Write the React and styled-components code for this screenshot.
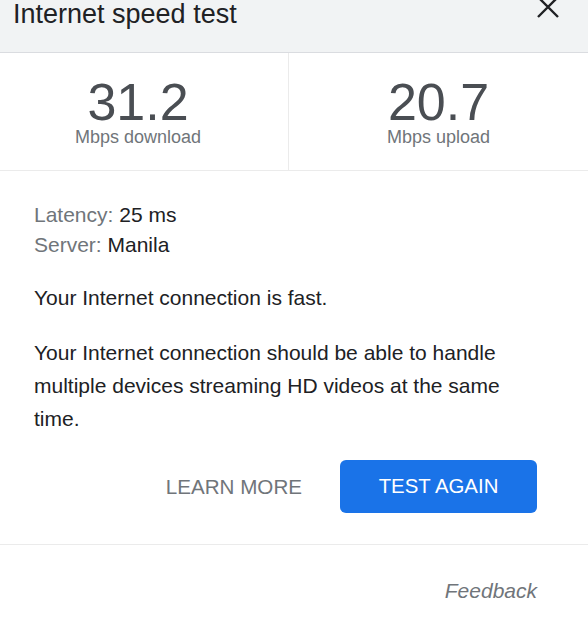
import React from 'react'
import styled, { createGlobalStyle } from 'styled-components'

const GlobalStyle = createGlobalStyle`
  html, body {
    margin: 0;
    padding: 0;
    background: #ffffff;
    overflow: hidden;
  }
  body {
    font-family: "Liberation Sans", Arial, sans-serif;
  }
`

const Dialog = styled.div`
  width: 600px;
  margin-left: -12px;
  background: #ffffff;
`

const Header = styled.div`
  height: 51px;
  background: #f1f3f4;
  border-bottom: 1px solid #dadce0;
  display: flex;
  justify-content: space-between;
  align-items: flex-start;
  padding: 1px 29px 0 25px;
`

const Title = styled.div`
  font-size: 27px;
  line-height: 27px;
  color: #202124;
`

const CloseButton = styled.button`
  border: none;
  background: none;
  padding: 0;
  margin-top: -5px;
  width: 22px;
  height: 22px;
  cursor: pointer;
  display: flex;
`

const Stats = styled.div`
  display: grid;
  grid-template-columns: 1fr 1fr;
  border-bottom: 1px solid #ebebeb;
`

const Stat = styled.div`
  display: flex;
  flex-direction: column;
  align-items: center;
  padding: 22px 0 24px;
  border-left: ${props => (props.divided ? '1px solid #ebebeb' : 'none')};
`

const Value = styled.div`
  font-size: 52px;
  line-height: 54px;
  color: #4a4e53;
`

const Unit = styled.div`
  font-size: 18px;
  line-height: 17px;
  color: #70757a;
`

const Body = styled.div`
  padding: 29px 51px 0 46px;
`

const Meta = styled.div`
  font-size: 21px;
  line-height: 30px;
  color: #202124;
`

const MetaLabel = styled.span`
  color: #70757a;
`

const Paragraph = styled.p`
  margin: ${props => props.top}px 0 0;
  font-size: 21px;
  line-height: 33px;
  color: #202124;
`

const Actions = styled.div`
  display: flex;
  justify-content: flex-end;
  align-items: center;
  gap: 38px;
  margin-top: 25px;
  padding-bottom: 31px;
`

const TextButton = styled.button`
  border: none;
  background: none;
  padding: 0;
  font-family: inherit;
  font-size: 20.6px;
  color: #70757a;
  cursor: pointer;
`

const PrimaryButton = styled.button`
  width: 197px;
  height: 53px;
  border: none;
  border-radius: 6px;
  background: #1a73e8;
  color: #ffffff;
  font-family: inherit;
  font-size: 20.4px;
  cursor: pointer;
`

const Footer = styled.div`
  border-top: 1px solid #ebebeb;
  display: flex;
  justify-content: flex-end;
  padding: 33px 51px 40px 0;
`

const FeedbackLink = styled.a`
  font-size: 21px;
  line-height: 25px;
  font-style: italic;
  color: #70757a;
  text-decoration: none;
`

const CloseIcon = () => (
  <svg width='22' height='22' viewBox='0 0 22 22'>
    <path
      d='M1 1 L21 21 M21 1 L1 21'
      stroke='#202124'
      strokeWidth='2.4'
      fill='none'
    />
  </svg>
)

export default function App() {
  return (
    <>
      <GlobalStyle />
      <Dialog>
        <Header>
          <Title>Internet speed test</Title>
          <CloseButton aria-label='Close'>
            <CloseIcon />
          </CloseButton>
        </Header>
        <Stats>
          <Stat>
            <Value>31.2</Value>
            <Unit>Mbps download</Unit>
          </Stat>
          <Stat divided>
            <Value>20.7</Value>
            <Unit>Mbps upload</Unit>
          </Stat>
        </Stats>
        <Body>
          <Meta>
            <MetaLabel>Latency:</MetaLabel> 25 ms
          </Meta>
          <Meta>
            <MetaLabel>Server:</MetaLabel> Manila
          </Meta>
          <Paragraph top={21}>Your Internet connection is fast.</Paragraph>
          <Paragraph top={22}>
            Your Internet connection should be able to handle multiple devices
            streaming HD videos at the same time.
          </Paragraph>
          <Actions>
            <TextButton>LEARN MORE</TextButton>
            <PrimaryButton>TEST AGAIN</PrimaryButton>
          </Actions>
        </Body>
        <Footer>
          <FeedbackLink href='#'>Feedback</FeedbackLink>
        </Footer>
      </Dialog>
    </>
  )
}
